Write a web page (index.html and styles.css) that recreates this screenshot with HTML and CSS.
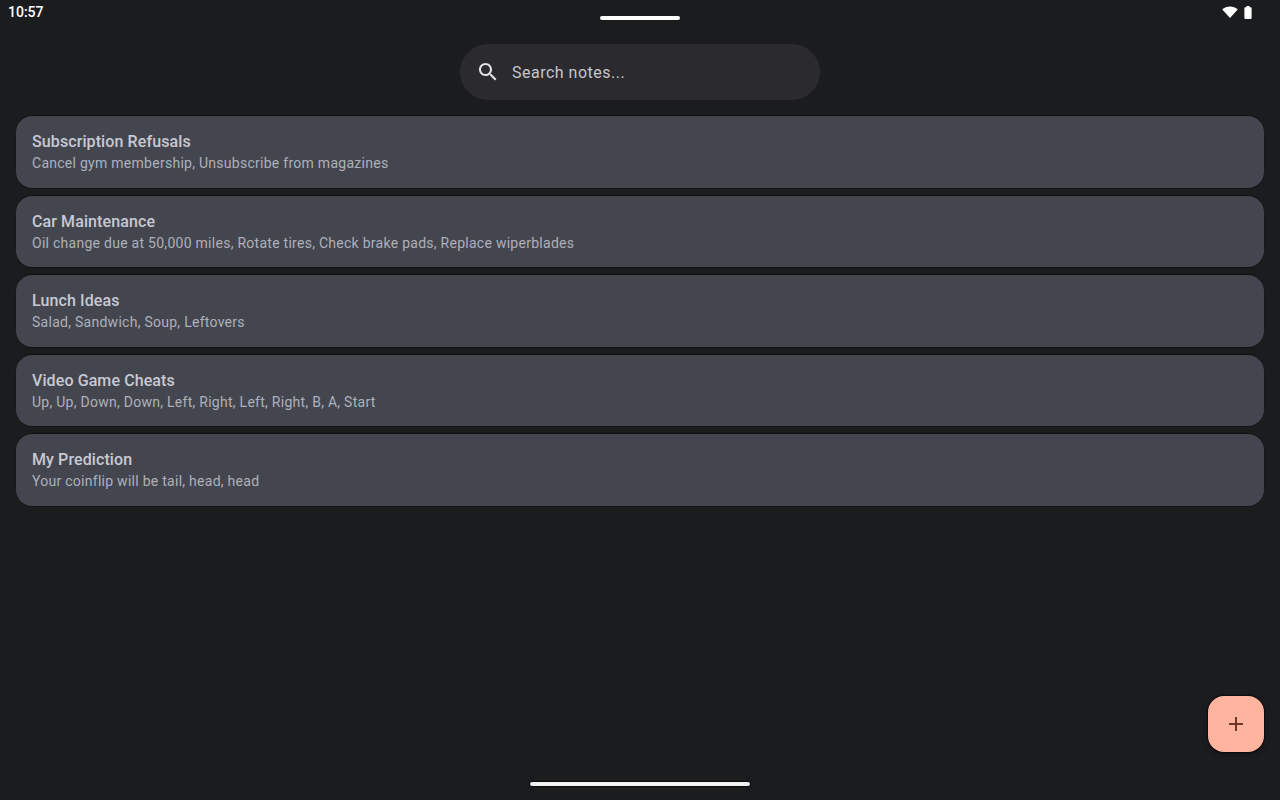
FILE: index.html
```html
<!DOCTYPE html>
<html lang="en">
<head>
  <meta charset="UTF-8" />
  <meta name="viewport" content="width=device-width, initial-scale=1.0"/>
  <title>Notes</title>
  <link rel="stylesheet" href="styles.css">
</head>
<body>

<div class="screen">
  <div class="status-bar">
    <div class="clock">10:57</div>
    <div class="top-handle"></div>
    <div class="status-icons">
      <svg class="wifi-icon" width="16" height="12" viewBox="0 0 16 12"><path d="M0.3 3.6C2.3 1.6 5 0.4 8 0.4s5.7 1.2 7.7 3.2L8 12z" fill="#fff"/></svg>
      <svg class="battery-icon" width="8" height="13" viewBox="0 0 8 13"><path d="M2.5 0h3v1.2h1.2c.5 0 .9.4.9.9v10c0 .5-.4.9-.9.9H1.3c-.5 0-.9-.4-.9-.9v-10c0-.5.4-.9.9-.9h1.2z" fill="#fff"/></svg>
    </div>
  </div>

  <div class="search-wrap">
    <div class="search-bar">
      <svg class="search-icon" width="24" height="24" viewBox="0 0 24 24"><path d="M15.5 14h-.79l-.28-.27C15.41 12.59 16 11.11 16 9.5 16 5.91 13.09 3 9.5 3S3 5.91 3 9.5 5.91 16 9.5 16c1.61 0 3.09-.59 4.23-1.57l.27.28v.79l5 4.99L20.49 19l-4.99-5zm-6 0C7.01 14 5 11.99 5 9.5S7.01 5 9.5 5 14 7.01 14 9.5 11.99 14 9.5 14z" fill="#e3e2e6"/></svg>
      <span class="search-text">Search notes...</span>
    </div>
  </div>

  <div class="note-list">
    <div class="note">
      <div class="note-title">Subscription Refusals</div>
      <div class="note-body">Cancel gym membership, Unsubscribe from magazines</div>
    </div>
    <div class="note">
      <div class="note-title">Car Maintenance</div>
      <div class="note-body">Oil change due at 50,000 miles, Rotate tires, Check brake pads, Replace wiperblades</div>
    </div>
    <div class="note">
      <div class="note-title">Lunch Ideas</div>
      <div class="note-body">Salad, Sandwich, Soup, Leftovers</div>
    </div>
    <div class="note">
      <div class="note-title">Video Game Cheats</div>
      <div class="note-body">Up, Up, Down, Down, Left, Right, Left, Right, B, A, Start</div>
    </div>
    <div class="note">
      <div class="note-title">My Prediction</div>
      <div class="note-body">Your coinflip will be tail, head, head</div>
    </div>
  </div>

  <div class="nav-bar">
    <div class="nav-handle"></div>
  </div>

  <div class="fab">
    <svg width="24" height="24" viewBox="0 0 24 24"><path d="M19 13h-6v6h-2v-6H5v-2h6V5h2v6h6v2z" fill="#6f3526"/></svg>
  </div>
</div>

</body>
</html>
```

FILE: styles.css
```css
* {
  box-sizing: border-box;
}
body {
  font-family: Roboto, sans-serif;
  background: #1b1c1e;
  margin: 0;
  padding: 0;
}
.screen {
  position: relative;
  display: flex;
  flex-direction: column;
  height: 800px;
  overflow: hidden;
}
.status-bar {
  display: flex;
  justify-content: space-between;
  height: 44px;
  padding: 0 28px 0 8px;
}
.clock {
  width: 80px;
  color: #fff;
  font-size: 14px;
  font-weight: 500;
  line-height: 24px;
}
.top-handle {
  width: 80px;
  height: 4px;
  margin-top: 16px;
  background: #fff;
  border-radius: 2px;
}
.status-icons {
  display: flex;
  justify-content: flex-end;
  gap: 6px;
  width: 60px;
  height: 19px;
  padding-top: 6px;
}
.search-wrap {
  display: flex;
  justify-content: center;
  margin-bottom: 16px;
}
.search-bar {
  display: flex;
  align-items: center;
  gap: 12px;
  width: 360px;
  height: 56px;
  padding: 0 16px;
  background: #2a2a2f;
  border-radius: 28px;
}
.search-text {
  color: #c6c6cc;
  font-size: 16px;
  letter-spacing: 0.5px;
}
.note-list {
  display: flex;
  flex-direction: column;
  gap: 8px;
  padding: 0 16px;
}
.note {
  height: 71.5px;
  padding: 16px;
  background: #44464f;
  border-radius: 16px;
  box-shadow: 0 -1px 1px rgba(0, 0, 0, 0.4), 0 1px 1px rgba(0, 0, 0, 0.3);
}
.note-title {
  color: #c8c9d2;
  font-size: 16px;
  font-weight: 500;
  line-height: 20px;
  letter-spacing: 0.1px;
}
.note-body {
  color: #aeb0ba;
  font-size: 14px;
  line-height: 22px;
  letter-spacing: 0.27px;
}
.nav-bar {
  display: flex;
  justify-content: center;
  margin-top: auto;
  height: 18px;
}
.nav-handle {
  width: 220px;
  height: 4px;
  background: #f2f2f2;
  border-radius: 2px;
  box-shadow: 0 0 1px 1px rgba(0, 0, 0, 0.6);
}
.fab {
  position: absolute;
  right: 16px;
  bottom: 48px;
  display: flex;
  align-items: center;
  justify-content: center;
  width: 56px;
  height: 56px;
  background: #ffb4a0;
  border-radius: 16px;
  box-shadow: 0 0 1px 1px rgba(0, 0, 0, 0.5), 0 3px 6px rgba(0, 0, 0, 0.3);
}
```
